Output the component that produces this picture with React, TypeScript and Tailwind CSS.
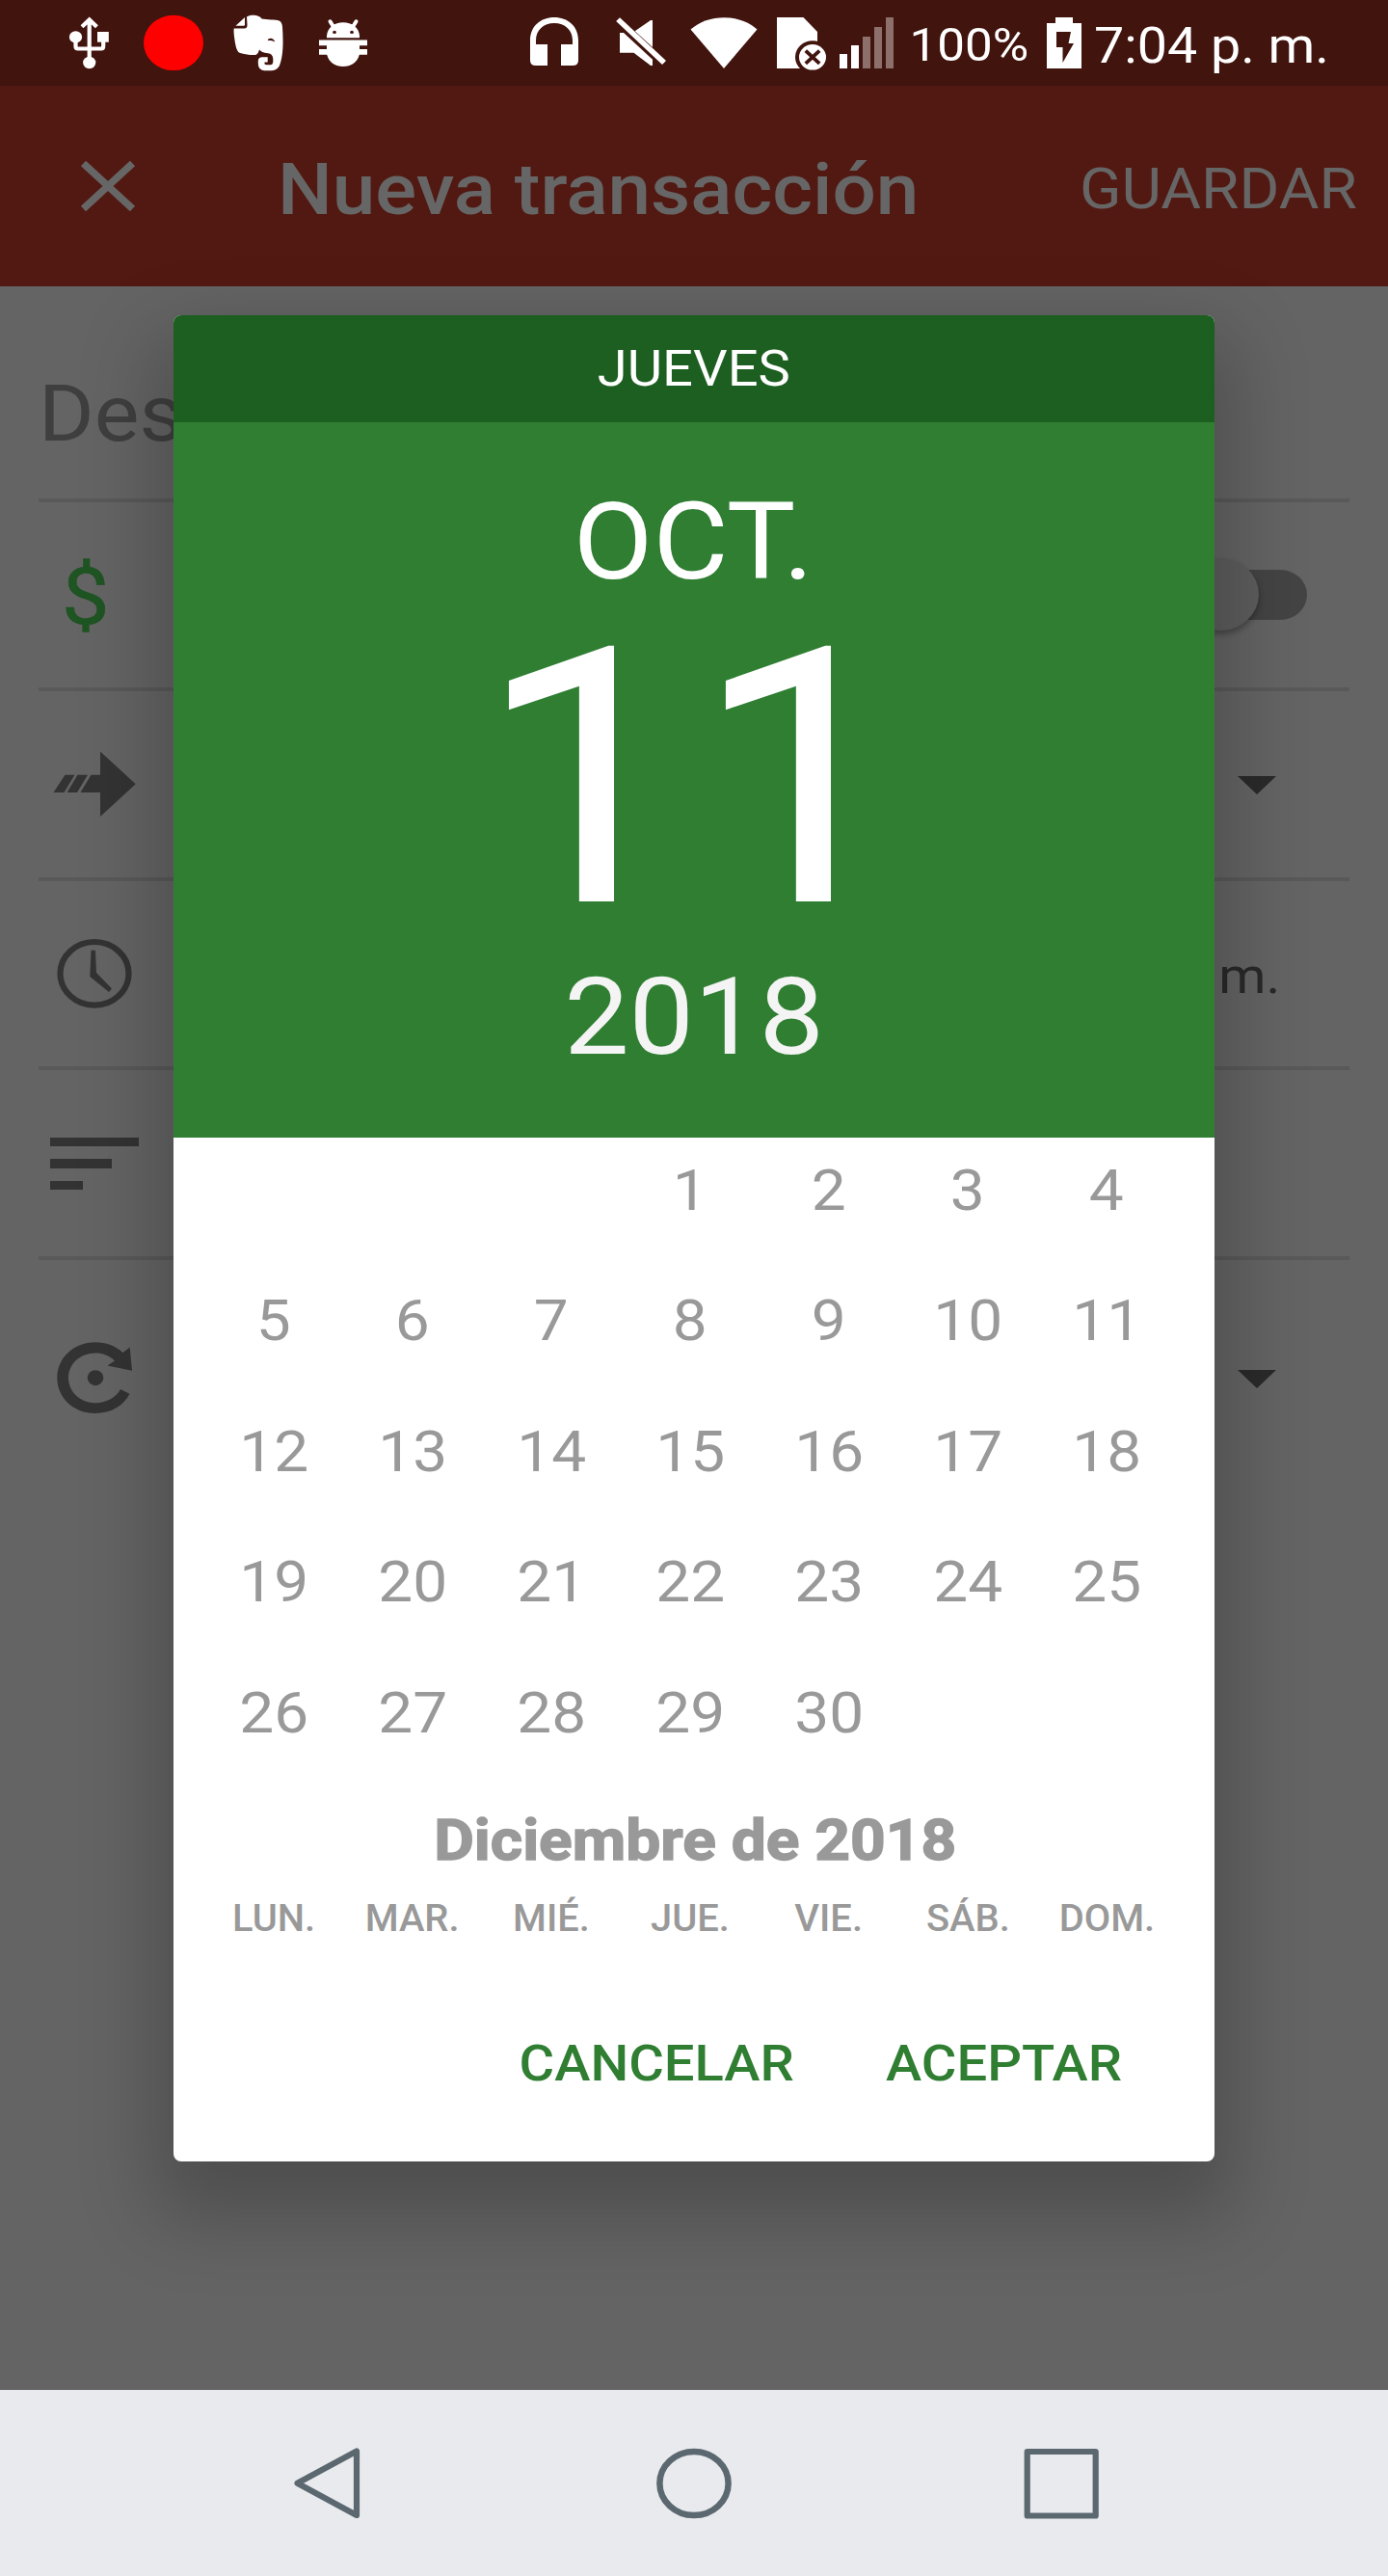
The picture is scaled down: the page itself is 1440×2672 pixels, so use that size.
import React from "react";

/* Glyphs are drawn slightly wider than they are tall across the whole screen. */
function Wide({ children, className = "" }: { children: React.ReactNode; className?: string }) {
  return <span className={"inline-block whitespace-nowrap scale-x-[1.079] " + className}>{children}</span>;
}

function StatusBar() {
  return (
    <header className="flex h-[89px] shrink-0 items-start bg-[#41140e] text-white">
      <svg className="ml-[70px] h-[89px] w-[45px] shrink-0" viewBox="70 0 45 89" fill="none" stroke="white">
        <path d="M92.7 64V22M85 27.8L92.7 20.5L100.400 27.800M78.500 40V48Q78.500 50.500 81 50.500H105Q107.200 50.500 107.200 48V40" strokeWidth="4.200" />
        <g fill="white" stroke="none">
          <ellipse cx="78.500" cy="38.400" rx="6.600" ry="6.200" />
          <rect x="101" y="33" width="11.800" height="10.700" />
          <ellipse cx="92.700" cy="65" rx="6.600" ry="6.200" />
        </g>
      </svg>
      <svg className="ml-[33px] h-[89px] w-[64px] shrink-0" viewBox="148 0 64 89">
        <ellipse cx="180" cy="44.400" rx="31" ry="28.700" fill="#ff0000" />
      </svg>
      <svg className="ml-[29px] h-[89px] w-[54px] shrink-0" viewBox="241 0 54 89">
        <path
          d="M256 17.500C259 15 269 14.800 271.500 19.500C277 20.500 286 20.300 289.500 21.500Q292.500 22.500 293 28C294 43 294 58 290 68Q287.500 73 282 73.300H274Q268 72.500 267.800 66V63Q268.200 59.300 272 59.300H277.700V64.500H274.500V66.500Q275 67.300 277 67.300H280.500Q283.300 67 283.300 64V61Q283 55.800 278 55.300Q271 54.500 269 51.500Q267.500 56.800 265 57C258 57 251 56 247.500 54.300Q244.500 51.500 243 38Q242.300 33 242.700 29.500H254Q256.500 29.300 256.500 26Z"
          fill="white"
        />
        <path d="M254 18V25.500Q254 26.800 252.700 26.800H244.500Z" fill="white" />
        <path d="M277.700 42C278.500 38.800 284 38.800 285.200 43.500C282.500 42 280 41.700 277.700 42Z" fill="#41140e" />
      </svg>
      <svg className="ml-[35px] h-[89px] w-[54px] shrink-0" viewBox="330 0 54 89">
        <g fill="white">
          <path d="M339 39.200V37C340 28 347 23.300 356 23.300S372 28 373 37V39.200Z" />
          <path d="M331 41.500H381V47.300H373V51H381V56.700H372.800C370.500 65 364 69 356 69S341.500 65 339.200 56.700H331V51H339V47.300H331Z" />
          <path d="M342.500 22.300L347 29.500M369.500 22.300L365 29.500" stroke="white" strokeWidth="4" strokeLinecap="round" />
        </g>
        <g fill="#41140e">
          <ellipse cx="347" cy="33.400" rx="1.900" ry="1.700" />
          <ellipse cx="365" cy="33.400" rx="1.900" ry="1.700" />
        </g>
      </svg>

      <svg className="ml-[164px] h-[89px] w-[54px] shrink-0" viewBox="548 0 54 89" fill="white">
        <path d="M550 42C550 27 561 18 575 18S600 27 600 42V62.500Q600 68 594 68H582V46H594V42C594 31 586 24 575 24S556 31 556 42V46H568V68H556Q550 68 550 62.500Z" />
      </svg>
      <svg className="ml-[36px] h-[89px] w-[54px] shrink-0" viewBox="638 0 54 89" fill="white">
        <path d="M643 34H647L677 61.800V68H675L657.500 54.700H643Z" />
        <path d="M658.700 32.300L675 21H677V49Z" />
        <path d="M639.200 22L643 18.300L691 63L687 67Z" />
      </svg>
      <svg className="ml-[24px] h-[89px] w-[70px] shrink-0" viewBox="716 0 70 89">
        <path d="M716.500 30.500C735 14 767 14 785.500 30.500L751 71Z" fill="white" />
      </svg>
      <svg className="ml-[19px] h-[89px] w-[54px] shrink-0" viewBox="805 0 54 89">
        <path d="M806 18H833.500L848 33V71H806Z" fill="white" />
        <ellipse cx="843" cy="59.300" rx="18" ry="17" fill="#41140e" />
        <rect x="848" y="36" width="12" height="8" fill="#41140e" />
        <ellipse cx="843" cy="59.300" rx="14" ry="13.200" fill="white" />
        <path d="M835.800 52.700L850.200 65.900M850.200 52.700L835.800 65.900" stroke="#41140e" strokeWidth="3.800" />
      </svg>
      <svg className="ml-[11px] h-[89px] w-[58px] shrink-0" viewBox="870 0 58 89" fill="white">
        <rect x="871" y="56" width="8" height="15" />
        <rect x="883" y="47" width="8" height="24" />
        <g fill="#8d706c">
          <rect x="895" y="38" width="8" height="33" />
          <rect x="907" y="28" width="8" height="43" />
          <rect x="919" y="18" width="8" height="53" />
        </g>
      </svg>
      <span className="ml-[16px] mt-[17px] w-[122px] text-center text-[47.400px] leading-[60px]">
        <Wide>100%</Wide>
      </span>
      <svg className="ml-[19px] h-[89px] w-[38px] shrink-0" viewBox="1085 0 38 89">
        <path d="M1086 24H1095V18H1113V24H1122V71H1086Z" fill="white" />
        <path d="M1096 33H1111L1108.500 45H1114L1102.500 65V49H1096Z" fill="#41140e" />
      </svg>
      <span className="ml-[12px] mt-[17.500px] text-[51.500px] leading-[60px]">
        <Wide className="origin-left">7:04 p. m.</Wide>
      </span>
    </header>
  );
}

function Toolbar() {
  return (
    <div className="flex h-[208px] shrink-0 items-start bg-[#521912] text-[#666]">
      <svg className="ml-[82px] mt-[76px] h-[56px] w-[60px] shrink-0" viewBox="82 165 60 56">
        <path d="M86.500 169.500L137.500 216.500M137.500 169.500L86.500 216.500" stroke="#666" strokeWidth="7.600" />
      </svg>
      <h1 className="ml-[146px] mt-[62.500px] w-[840px] text-[74.200px] font-medium leading-[90px]">
        <Wide className="origin-left">Nueva transacción</Wide>
      </h1>
      <span className="mt-[67px] w-[280px] text-right text-[59.300px] leading-[80px]">
        <Wide className="origin-right">GUARDAR</Wide>
      </span>
    </div>
  );
}

function Caret() {
  return (
    <svg className="mr-[76px] mt-[3px] h-[19px] w-[40px]" viewBox="0 0 40 19">
      <path d="M0 0H40L20 19Z" fill="#2a2a2a" />
    </svg>
  );
}

function Row({ icon, children, last = false }: { icon: React.ReactNode; children?: React.ReactNode; last?: boolean }) {
  return (
    <div
      className={
        "mx-10 flex shrink-0 items-center justify-between " +
        (last ? "h-[245px]" : "h-[196.600px] border-b-4 border-[#595959]")
      }
    >
      {icon}
      {children}
    </div>
  );
}

function Form() {
  return (
    <main className="flex flex-1 flex-col bg-[#646464]">
      <div className="mx-10 h-[223.500px] shrink-0 border-b-4 border-[#595959] pt-[82px] text-[81.600px] leading-[100px] text-[#3f3f3f]">
        <Wide className="origin-left">Des</Wide>
      </div>
      <Row
        icon={
          <span className="ml-[24px] mt-[5px] text-[81.600px] leading-[96px] text-[#1f5423] [-webkit-text-stroke:0.600px_#1f5423]">
            <Wide className="origin-left">$</Wide>
          </span>
        }
      >
        <div className="relative mr-[44px] h-[76px] w-[130px]">
          <div className="absolute right-0 top-[12px] h-[52px] w-[110px] rounded-[28px/26px] bg-[#444]" />
          <div className="absolute left-0 top-0 h-[75px] w-[80px] rounded-[50%] bg-[#5d5d5d] shadow-[0_4px_6px_rgba(0,0,0,0.3)]" />
        </div>
      </Row>
      <Row
        icon={
          <svg className="ml-[15px] h-[68px] w-[87px]" viewBox="55 779.500 87 68" fill="#333">
            <path d="M67.500 804.300H77.500L66.500 822.500H55.500Z" />
            <path d="M80.500 804.300H91L80 822.500H69.500Z" />
            <path d="M94.500 804.300H104V780L140.700 813.700L104 847.500V822.500H83.500Z" />
          </svg>
        }
      >
        <Caret />
      </Row>
      <Row
        icon={
          <svg className="ml-[18px] h-[74px] w-[80px]" viewBox="58 973.500 80 74" fill="none" stroke="#333">
            <ellipse cx="98" cy="1010.300" rx="35.500" ry="32.800" strokeWidth="6.200" />
            <path d="M94.500 986.300H98.900L100 1009.500L116 1026L113 1029.500L93.300 1013.500Z" fill="#333" stroke="none" />
          </svg>
        }
      >
        <span className="mr-[72px] mt-[7px] text-[52px] leading-[60px] text-[#292929]">
          <Wide className="origin-right">m.</Wide>
        </span>
      </Row>
      <Row
        icon={
          <div className="ml-[12px] mt-[1px] flex flex-col gap-[13px]">
            <div className="h-[9.500px] w-[92px] bg-[#333]" />
            <div className="h-[9.500px] w-[64px] bg-[#333]" />
            <div className="h-[9.500px] w-[34px] bg-[#333]" />
          </div>
        }
      />
      <Row
        last
        icon={
          <svg className="ml-[18px] h-[76px] w-[82px]" viewBox="58 1390.500 82 76" fill="#333">
            <path d="M134.500 1445.300C128 1458 115 1465.500 99 1465.500C76 1465.500 59.300 1449 59.300 1428.700S76 1391.700 99 1391.700C110 1391.700 120 1395.500 127.500 1402.500L134.700 1397L137 1421.300L111.500 1416L119 1411C113.500 1405.500 106.500 1403 99 1403C83 1403 71 1414.500 71 1428.700S83 1454.700 99 1454.700C110 1454.700 120 1449.500 125 1440.500Z" />
            <ellipse cx="99" cy="1428.700" rx="8.300" ry="8" />
          </svg>
        }
      >
        <Caret />
      </Row>
    </main>
  );
}

function NavBar() {
  return (
    <nav className="flex h-[193px] shrink-0 items-center bg-[#e9eaee] pl-[304px] pr-[299px]">
      <svg className="h-[76px] w-[71px]" viewBox="0 0 71 76" fill="none" stroke="#5b6870" strokeWidth="6.200" strokeLinejoin="round">
        <path d="M66 4.500V71L4.500 37.800Z" />
      </svg>
      <svg className="ml-[305px] h-[76px] w-[80px]" viewBox="0 0 80 76" fill="none" stroke="#5b6870" strokeWidth="6.500">
        <ellipse cx="40" cy="38" rx="35.600" ry="33" />
      </svg>
      <svg className="ml-[301px] h-[76px] w-[80px]" viewBox="0 0 80 76" fill="none" stroke="#5b6870" strokeWidth="6.200" strokeLinejoin="round">
        <rect x="4.700" y="5" width="71" height="66.500" />
      </svg>
    </nav>
  );
}

const days = ["", "", "", ...Array.from({ length: 30 }, (_, i) => String(i + 1))];
const weekdays = ["LUN.", "MAR.", "MIÉ.", "JUE.", "VIE.", "SÁB.", "DOM."];

function DatePicker() {
  return (
    <div
      role="dialog"
      className="absolute left-[180px] top-[326.500px] flex h-[1915px] w-[1080px] flex-col overflow-hidden rounded-[8px] bg-white shadow-[0_40px_80px_20px_rgba(0,0,0,0.22)]"
    >
      <div className="h-[111px] shrink-0 bg-[#1c5f20] text-center text-[52px] leading-[111px] text-white">
        <Wide>JUEVES</Wide>
      </div>
      <div className="flex h-[742.500px] shrink-0 flex-col items-center bg-[#2f7e32] pt-[59px] text-white">
        <div className="text-[111.200px] leading-[130px]">
          <Wide>OCT.</Wide>
        </div>
        <div className="mt-[1px] text-[371px] leading-[362px]">
          <Wide>11</Wide>
        </div>
        <div className="-mt-[1px] text-[111.200px] leading-[132px] text-[#f4f4f4]">
          <Wide>2018</Wide>
        </div>
      </div>
      <div className="ml-[32px] mt-[14.500px] grid w-[1008px] shrink-0 grid-cols-7 gap-y-[55.500px] text-center text-[59.300px] leading-[80px] text-[#999]">
        {days.map((d, i) => (
          <div key={i} className="h-[80px]">
            <Wide>{d}</Wide>
          </div>
        ))}
      </div>
      <div className="mt-[52px] pl-[2px] text-center text-[59.400px] font-bold leading-[80px] text-[#999] [-webkit-text-stroke:1.400px_#999]">
        <Wide>Diciembre de 2018</Wide>
      </div>
      <div className="ml-[32px] mt-[19px] grid w-[1008px] grid-cols-7 text-center text-[38px] font-medium leading-[44px] text-[#999]">
        {weekdays.map((d) => (
          <div key={d}>
            <span className="inline-block scale-x-[1.050]">{d}</span>
          </div>
        ))}
      </div>
      <div className="mt-[99px] flex pl-[355px] text-center text-[52px] font-medium leading-[60px] text-[#2f7e32]">
        <button className="w-[292px]">
          <Wide>CANCELAR</Wide>
        </button>
        <button className="ml-[89px] w-[252px]">
          <Wide>ACEPTAR</Wide>
        </button>
      </div>
    </div>
  );
}

export default function App() {
  return (
    <div className="relative flex h-[2672px] w-[1440px] flex-col overflow-hidden font-['Roboto',sans-serif]">
      <StatusBar />
      <Toolbar />
      <Form />
      <NavBar />
      <DatePicker />
    </div>
  );
}
